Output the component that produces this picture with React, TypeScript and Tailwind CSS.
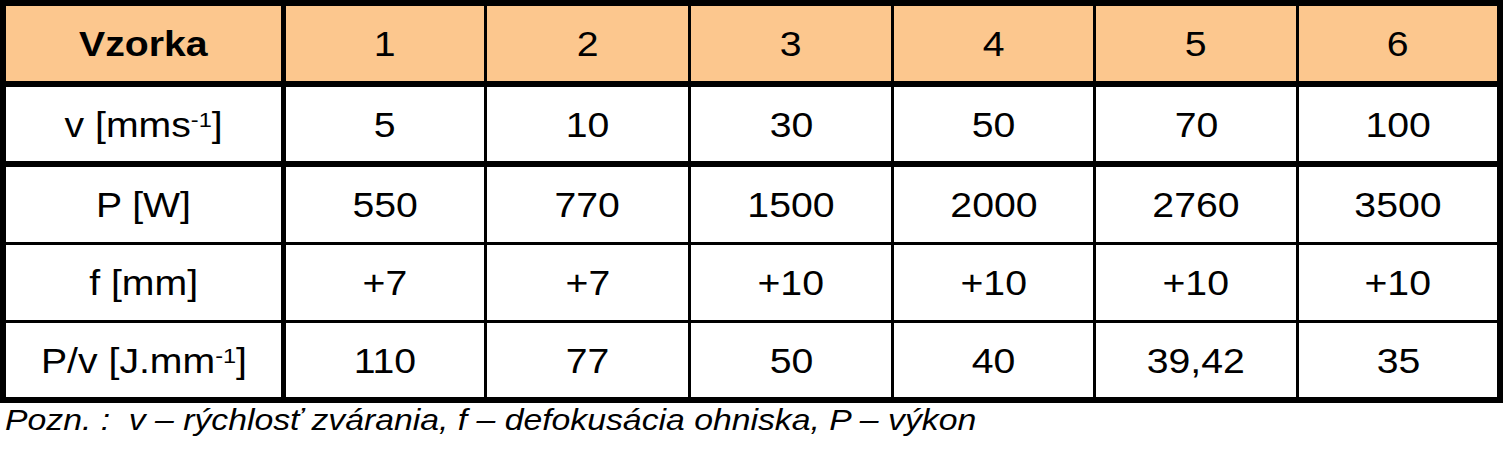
import React from 'react';

// cell widths include their right border
const widths = ['w-[280px]', 'w-[201px]', 'w-[204px]', 'w-[203px]', 'w-[202px]', 'w-[203px]', 'w-[198px]'];

type Row = {
  label: React.ReactNode;
  values: string[];
  height: string;
};

const Sup = ({ children }: { children: React.ReactNode }) => (
  <sup className="text-[21px] relative -top-[10px] align-baseline">{children}</sup>
);

const rows: Row[] = [
  {
    label: (
      <>
        v [mms<Sup>-1</Sup>]
      </>
    ),
    values: ['5', '10', '30', '50', '70', '100'],
    height: 'h-[80px] border-b-[6px]',
  },
  {
    label: 'P [W]',
    values: ['550', '770', '1500', '2000', '2760', '3500'],
    height: 'h-[78px] border-b-[3px]',
  },
  {
    label: 'f [mm]',
    values: ['+7', '+7', '+10', '+10', '+10', '+10'],
    height: 'h-[78px] border-b-[3px]',
  },
  {
    label: (
      <>
        P/v [J.mm<Sup>-1</Sup>]
      </>
    ),
    values: ['110', '77', '50', '40', '39,42', '35'],
    height: 'h-[74px]',
  },
];

const Cell = ({ i, children, bold }: { i: number; children: React.ReactNode; bold?: boolean }) => (
  <div
    className={`${widths[i]} shrink-0 flex items-center justify-center border-black ${
      i === 0 ? 'border-r-[5px]' : i < 6 ? 'border-r-[3px]' : ''
    } ${bold ? 'font-bold' : ''}`}
  >
    <span className="inline-block whitespace-nowrap scale-x-[1.12]">{children}</span>
  </div>
);

export default function App() {
  return (
    <div className="w-[1503px] h-[449px] bg-white text-black font-['Liberation_Sans',Arial,sans-serif]">
      <div className="border-[6px] border-black w-[1503px] text-[35px] leading-none">
        {/* header */}
        <div className="flex h-[81px] bg-[#fcc78e] border-b-[6px] border-black">
          <Cell i={0} bold>Vzorka</Cell>
          {['1', '2', '3', '4', '5', '6'].map((n, k) => (
            <Cell key={n} i={k + 1}>{n}</Cell>
          ))}
        </div>
        {rows.map((r, idx) => (
          <div key={idx} className={`flex border-black ${r.height}`}>
            <Cell i={0}>{r.label}</Cell>
            {r.values.map((v, k) => (
              <Cell key={k} i={k + 1}>{v}</Cell>
            ))}
          </div>
        ))}
      </div>
      <p className="italic text-[30px] leading-none pl-[5px] pt-[2px] whitespace-pre">
        <span className="inline-block origin-left scale-x-[1.125]">
          {'Pozn. :  v – rýchlosť zvárania, f – defokusácia ohniska, P – výkon'}
        </span>
      </p>
    </div>
  );
}
